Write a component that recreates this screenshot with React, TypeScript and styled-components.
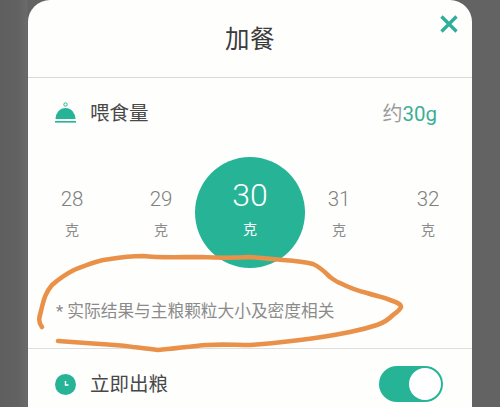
import React, { useState } from 'react';
import styled, { createGlobalStyle } from 'styled-components';

const GlobalStyle = createGlobalStyle`
    html, body {
        margin: 0;
        padding: 0;
        background: #636363;
    }
    body {
        font-family: "Roboto", "Noto Sans CJK SC", sans-serif;
    }
`;

const Page = styled.div`
    position: relative;
    width: 500px;
    height: 407px;
    overflow: hidden;
    background: linear-gradient(90deg, #5f5f5f 0, #626262 18px, #6a6a6a 27px, #636363 28px);
    padding: 0 28px;
    box-sizing: border-box;
`;

const Card = styled.div`
    height: 407px;
    background: #fefefd;
    border-radius: 22px 22px 0 0;
    overflow: hidden;
`;

const Header = styled.div`
    position: relative;
    height: 75px;
    padding-bottom: 2px;
    border-bottom: 1px solid #d8d8d6;
    display: flex;
    align-items: center;
    justify-content: center;
    font-size: 24.5px;
    color: #3b3b3b;
    letter-spacing: 0.5px;
`;

const CloseButton = styled.div`
    position: absolute;
    right: 13px;
    top: 14px;
    width: 20px;
    height: 20px;
    display: flex;
`;

const AmountRow = styled.div`
    height: 70px;
    padding: 0 35px 0 27px;
    display: flex;
    align-items: center;
    justify-content: space-between;
`;

const RowLabel = styled.div`
    display: flex;
    align-items: center;
    gap: 14px;
    font-size: 19.5px;
    color: #484848;
`;

const RowText = styled.span`
    position: relative;
    top: -2px;
`;

const Approx = styled.div`
    position: relative;
    top: -1px;
    font-size: 20px;
    color: #9b9b9b;

    span {
        color: #3cae97;
        font-size: 20.5px;
    }
`;

const Picker = styled.div`
    display: grid;
    grid-template-columns: repeat(5, 89px);
    justify-content: center;
    height: 111px;
    margin-top: 9px;
    align-items: center;
`;

const PickerItem = styled.div<{ $active?: boolean }>`
    width: ${props => (props.$active ? '110px' : 'auto')};
    height: ${props => (props.$active ? '111px' : 'auto')};
    justify-self: center;
    border-radius: 50%;
    background: ${props => (props.$active ? '#27b496' : 'transparent')};
    color: ${props => (props.$active ? '#fff' : '#808080')};
    display: flex;
    flex-direction: column;
    align-items: center;
    justify-content: center;
`;

const PickerValue = styled.div<{ $active?: boolean }>`
    font-size: ${props => (props.$active ? '32px' : '20.5px')};
    line-height: ${props => (props.$active ? '34px' : '24px')};
    font-weight: 300;
    margin-top: ${props => (props.$active ? '-8px' : '2px')};
`;

const PickerUnit = styled.div<{ $active?: boolean }>`
    font-size: 14px;
    line-height: 20px;
    margin-top: ${props => (props.$active ? '7px' : '9px')};
    color: ${props => (props.$active ? '#fff' : '#8c8c8c')};
`;

const Note = styled.div`
    height: 81px;
    padding: 3px 28px 0;
    display: flex;
    align-items: center;
    font-size: 16.7px;
    color: #8b8b8b;
    border-bottom: 1px solid #dededc;
    box-sizing: border-box;
`;

const FeedRow = styled.div`
    height: 70px;
    padding: 0 29px 0 27px;
    display: flex;
    align-items: center;
    justify-content: space-between;
`;

const Switch = styled.button<{ $on: boolean }>`
    width: 64px;
    height: 36px;
    border: 0;
    padding: 2px;
    border-radius: 18px;
    background: #27b496;
    display: flex;
    justify-content: ${props => (props.$on ? 'flex-end' : 'flex-start')};
`;

const SwitchKnob = styled.span`
    width: 32px;
    height: 32px;
    border-radius: 50%;
    background: #fff;
`;

const Scribble = styled.svg`
    position: absolute;
    left: 0;
    top: 0;
    pointer-events: none;
`;

const amounts = [28, 29, 30, 31, 32];

const App: React.FC = () => {

    const [feedNow, setFeedNow] = useState(true);

    return (
        <Page>
            <GlobalStyle />
            <Card>
                <Header>
                    加餐
                    <CloseButton>
                        <svg width="20" height="20" viewBox="0 0 20 20">
                            <path d="M2.5 2.5 L17.5 17.5 M17.5 2.5 L2.5 17.5" stroke="#2fae9a" strokeWidth="3.4" />
                        </svg>
                    </CloseButton>
                </Header>
                <AmountRow>
                    <RowLabel>
                        <svg width="21" height="22" viewBox="0 0 21 22">
                            <circle cx="10.5" cy="2.5" r="1.7" fill="none" stroke="#27b496" strokeWidth="1" />
                            <path d="M0.5 17 A10 11 0 0 1 20.5 17 Z" fill="#27b496" />
                            <rect x="0" y="19" width="21" height="1.6" fill="#27b496" />
                        </svg>
                        <RowText>喂食量</RowText>
                    </RowLabel>
                    <Approx>约<span>30g</span></Approx>
                </AmountRow>
                <Picker>
                    {amounts.map(amount => (
                        <PickerItem key={amount} $active={amount === 30}>
                            <PickerValue $active={amount === 30}>{amount}</PickerValue>
                            <PickerUnit $active={amount === 30}>克</PickerUnit>
                        </PickerItem>
                    ))}
                </Picker>
                <Note>* 实际结果与主粮颗粒大小及密度相关</Note>
                <FeedRow>
                    <RowLabel>
                        <svg width="21" height="21" viewBox="0 0 21 21">
                            <circle cx="10.5" cy="10.5" r="10.5" fill="#27b496" />
                            <path d="M10.5 7 V11 H13.5" fill="none" stroke="#fff" strokeWidth="1.4" />
                        </svg>
                        <RowText>立即出粮</RowText>
                    </RowLabel>
                    <Switch $on={feedNow} onClick={() => setFeedNow(!feedNow)}>
                        <SwitchKnob />
                    </Switch>
                </FeedRow>
            </Card>
            {/* hand-drawn marker over the screenshot */}
            <Scribble width="500" height="407" viewBox="0 0 500 407">
                <path
                    d="M42 327 C38 322 39 318 41 311 C44 298 46 292 52 285 C60 278 66 274 74 270 C86 265 98 260 110 259 C122 257 132 256 143 256 C160 258 180 257 200 257 C220 258 236 258 250 257 C262 258 272 259 283 260 C296 261 305 262 313 264 C320 267 325 272 330 277 C334 280 337 282 340 283 C350 288 358 291 367 293 C376 296 384 297 390 300 C396 302 401 304 401 307 C400 310 397 312 393 315 C388 320 383 323 377 325 C368 328 360 330 350 332 C335 335 318 338 300 340 C284 342 268 344 250 345 C236 345 222 344 207 345 C190 346 174 349 158 350 C150 349 142 348 133 347 C122 345 112 345 100 344 C86 343 72 342 58 341"
                    fill="none"
                    stroke="#ea9149"
                    strokeWidth="4.6"
                    strokeLinecap="round"
                    strokeLinejoin="round"
                />
            </Scribble>
        </Page>
    );

};

export default App;
